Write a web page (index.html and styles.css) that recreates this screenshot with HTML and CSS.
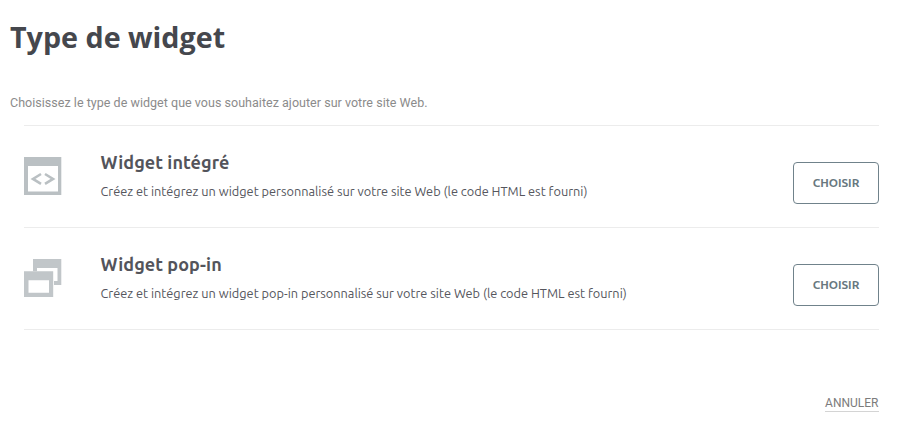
FILE: index.html
```html
<!DOCTYPE html>
<html lang="fr">
<head>
<meta charset="utf-8">
<title>Type de widget</title>
<link rel="stylesheet" href="styles.css">
</head>
<body>
<main class="page">
  <h1 class="title">Type de widget</h1>
  <p class="intro">Choisissez le type de widget que vous souhaitez ajouter sur votre site Web.</p>
  <ul class="list">
    <li class="item">
      <svg class="icon" viewBox="0 0 38 38" aria-hidden="true">
        <path fill="#bac0c3" fill-rule="evenodd" d="M0 0H37.3V38H0ZM4 9V34.4H34V9Z"/>
        <path fill="none" stroke="#bac0c3" stroke-width="2.6" d="M17 17L9 21.9L17 26.8M21 17L29 21.9L21 26.8"/>
      </svg>
      <div class="text">
        <h2 class="name">Widget intégré</h2>
        <p class="desc">Créez et intégrez un widget personnalisé sur votre site Web (le code HTML est fourni)</p>
      </div>
      <button class="choose">CHOISIR</button>
    </li>
    <li class="item">
      <svg class="icon" viewBox="0 0 38 38" aria-hidden="true">
        <path fill="#c1c6c9" fill-rule="evenodd" d="M9 0H37.3V26H30V22H33.5V9H13V12.3H9Z"/>
        <path fill="#c1c6c9" fill-rule="evenodd" d="M0 12.3H29.2V38H0ZM4.5 21.2V33.7H25V21.2Z"/>
      </svg>
      <div class="text">
        <h2 class="name">Widget pop-in</h2>
        <p class="desc">Créez et intégrez un widget pop-in personnalisé sur votre site Web (le code HTML est fourni)</p>
      </div>
      <button class="choose">CHOISIR</button>
    </li>
  </ul>
  <footer class="footer"><a class="cancel">ANNULER</a></footer>
</main>
</body>
</html>
```
FILE: styles.css
```css
* { box-sizing: border-box; }
body { margin: 0; background: #fff; }
.page { padding: 16px 23px 0 10px; }
.title {
  margin: 0;
  font: 700 28.7px/42px "Open Sans", sans-serif;
  color: #45474d;
}
.intro {
  margin: 35px 0 0;
  font: 400 12.5px/20px Roboto, sans-serif;
  letter-spacing: 0.03px;
  color: #8b8b8b;
}
.list {
  list-style: none;
  margin: 12px 0 0 14px;
  padding: 0;
  border-top: 1px solid #ececec;
}
.item {
  display: flex;
  align-items: flex-start;
  height: 102px;
  border-bottom: 1px solid #ececec;
}
.icon { width: 38px; height: 38px; margin-top: 31px; flex: none; }
.text { flex: 1; margin: 22px 0 0 38.5px; white-space: nowrap; }
.name {
  margin: 0;
  font: 700 18px/28px Ubuntu, "Noto Sans", sans-serif;
  letter-spacing: 0.06px;
  color: #53545b;
}
.desc {
  margin: 5px 0 0;
  font: 400 12.75px/20px Ubuntu, "Noto Sans", sans-serif;
  color: #55565d;
}
.choose {
  flex: none;
  width: 86px;
  height: 42px;
  margin-top: 36px;
  padding: 0;
  border: 1px solid #70828b;
  border-radius: 4px;
  background: #fff;
  color: #68787f;
  font: 700 11.75px/20px Ubuntu, "Noto Sans", sans-serif;
}
.footer { display: flex; justify-content: flex-end; margin-top: 64px; }
.cancel {
  padding: 1px 0.5px 0 0;
  font: 400 12px/16px Roboto, sans-serif;
  color: #7c7c7c;
  border-bottom: 1px solid #d4d4d4;
}
```
